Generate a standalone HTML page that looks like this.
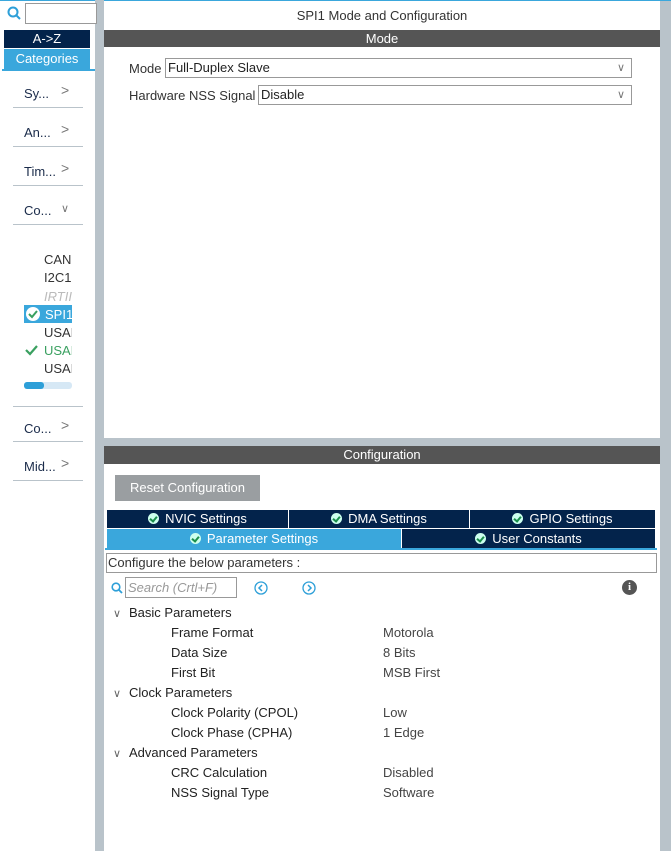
<!DOCTYPE html>
<html><head><style>
*{margin:0;padding:0;box-sizing:border-box}
body{width:671px;height:851px;position:relative;background:#b9c3ca;font-family:"Liberation Sans",sans-serif;font-size:13px;color:#222;overflow:hidden}
.a{position:absolute}
.cat{position:absolute;left:13px;width:70px;border-bottom:1px solid #b9c3ca;height:36px;color:#1a2b4a;font-size:13px}
.cat span{position:absolute;left:11px;top:14px}
.cat i{position:absolute;left:48px;top:10px;font-style:normal;color:#777;font-size:14px}
.li{position:absolute;left:44px;width:28px;overflow:hidden;white-space:nowrap;font-size:13px;color:#333}
.tab{position:absolute;height:18px;background:#03234b;color:#fff;text-align:center;font-size:13px;line-height:18px}
.ck{display:inline-block;width:11px;height:11px;border-radius:50%;background:#cfe;vertical-align:-1px;margin-right:6px;position:relative}
.ck:after{content:"";position:absolute;left:3px;top:2px;width:3px;height:5px;border:solid #1a8f4c;border-width:0 2px 2px 0;transform:rotate(40deg)}
.p{position:absolute;font-size:13px;color:#222}
.v{position:absolute;left:383px;font-size:13px;color:#444}
.chev{position:absolute;font-size:11px;color:#666}
</style></head><body>
<div class="a" style="left:0;top:0;width:95px;height:851px;background:#fff"></div>
<div class="a" style="left:0;top:0;width:95px;height:1px;background:#3aa7dc"></div>
<svg class="a" style="left:7px;top:6px" width="14" height="14"><circle cx="6" cy="6" r="4.5" fill="none" stroke="#2d9fd8" stroke-width="2"/><line x1="9" y1="9" x2="13" y2="13" stroke="#2d9fd8" stroke-width="2"/></svg>
<div class="a" style="left:25px;top:3px;width:72px;height:21px;border:1px solid #999;background:#fff"></div>
<div class="a" style="left:4px;top:30px;width:86px;height:18px;background:#03234b;color:#fff;text-align:center;line-height:18px">A-&gt;Z</div>
<div class="a" style="left:4px;top:49px;width:86px;height:20px;background:#3aa7dc;color:#fff;text-align:center;line-height:20px">Categories</div>
<div class="a" style="left:2px;top:69px;width:93px;height:2px;background:#3aa7dc"></div>
<div class="cat" style="top:72px"><span>Sy...</span><i>&gt;</i></div>
<div class="cat" style="top:111px"><span>An...</span><i>&gt;</i></div>
<div class="cat" style="top:150px"><span>Tim...</span><i>&gt;</i></div>
<div class="cat" style="top:189px"><span>Co...</span><i style="font-size:11px;top:13px">&#8744;</i></div>
<div class="li" style="top:252px">CAN</div>
<div class="li" style="top:270px">I2C1</div>
<div class="li" style="top:289px;color:#bbb;font-style:italic">IRTII</div>
<div class="a" style="left:24px;top:305px;width:48px;height:18px;background:#3aa7dc"></div>
<svg class="a" style="left:25px;top:306px" width="16" height="16"><circle cx="8" cy="8" r="7" fill="#fff"/><path d="M4 8l3 3 5-6" stroke="#3aa060" stroke-width="2" fill="none"/></svg>
<div class="li" style="top:307px;left:45px;width:27px;color:#fff">SPI1</div>
<div class="li" style="top:325px">USART</div>
<svg class="a" style="left:25px;top:344px" width="14" height="12"><path d="M1 6l4 4 7-8" stroke="#3aa060" stroke-width="2.2" fill="none"/></svg>
<div class="li" style="top:343px;color:#3aa060">USART</div>
<div class="li" style="top:361px">USART</div>
<div class="a" style="left:24px;top:382px;width:48px;height:7px;background:#d6e8f5;border-radius:3px"></div>
<div class="a" style="left:24px;top:382px;width:20px;height:7px;background:#2d9fd8;border-radius:3px"></div>
<div class="cat" style="top:406px;border-top:1px solid #b9c3ca"><span>Co...</span><i>&gt;</i></div>
<div class="cat" style="top:445px"><span>Mid...</span><i>&gt;</i></div>
<div class="a" style="left:104px;top:0;width:556px;height:438px;background:#fff"></div>
<div class="a" style="left:104px;top:0;width:567px;height:1px;background:#3aa7dc"></div>
<div class="a" style="left:104px;top:8px;width:556px;text-align:center;color:#333">SPI1 Mode and Configuration</div>
<div class="a" style="left:104px;top:30px;width:556px;height:17px;background:#555;color:#fff;text-align:center;line-height:17px">Mode</div>
<div class="a" style="left:129px;top:61px;color:#333">Mode</div>
<div class="a" style="left:165px;top:58px;width:467px;height:20px;border:1px solid #999;padding-left:2px;line-height:18px">Full-Duplex Slave<span style="position:absolute;right:6px;color:#777;font-size:11px">&#8744;</span></div>
<div class="a" style="left:129px;top:88px;color:#333">Hardware NSS Signal</div>
<div class="a" style="left:258px;top:85px;width:374px;height:20px;border:1px solid #999;padding-left:2px;line-height:18px">Disable<span style="position:absolute;right:6px;color:#777;font-size:11px">&#8744;</span></div>
<div class="a" style="left:104px;top:446px;width:556px;height:405px;background:#fff"></div>
<div class="a" style="left:104px;top:446px;width:556px;height:18px;background:#555;color:#fff;text-align:center;line-height:18px">Configuration</div>
<div class="a" style="left:115px;top:475px;width:145px;height:26px;background:#9a9ea1;color:#fff;text-align:center;line-height:26px">Reset Configuration</div>
<div class="tab" style="left:107px;top:510px;width:181px"><span class="ck"></span>NVIC Settings</div>
<div class="tab" style="left:289px;top:510px;width:180px"><span class="ck"></span>DMA Settings</div>
<div class="tab" style="left:470px;top:510px;width:185px"><span class="ck"></span>GPIO Settings</div>
<div class="tab" style="left:107px;top:529px;width:294px;height:20px;line-height:20px;background:#3aa7dc"><span class="ck"></span>Parameter Settings</div>
<div class="tab" style="left:402px;top:529px;width:253px;height:20px;line-height:20px"><span class="ck"></span>User Constants</div>
<div class="a" style="left:105px;top:548px;width:552px;height:2px;background:#3aa7dc"></div>
<div class="a" style="left:106px;top:553px;width:551px;height:20px;border:1px solid #999;line-height:18px;padding-left:1px;color:#333">Configure the below parameters :</div>
<svg class="a" style="left:111px;top:582px" width="12" height="12"><circle cx="5" cy="5" r="3.8" fill="none" stroke="#2d9fd8" stroke-width="1.6"/><line x1="8" y1="8" x2="11" y2="11" stroke="#2d9fd8" stroke-width="1.8"/></svg>
<div class="a" style="left:125px;top:577px;width:112px;height:21px;border:1px solid #999;color:#999;font-style:italic;line-height:19px;padding-left:2px">Search (Crtl+F)</div>
<svg class="a" style="left:254px;top:581px" width="14" height="14"><circle cx="7" cy="7" r="6" fill="none" stroke="#2d9fd8" stroke-width="1.3"/><path d="M8 4l-3 3 3 3" stroke="#2d9fd8" stroke-width="1.5" fill="none"/></svg>
<svg class="a" style="left:302px;top:581px" width="14" height="14"><circle cx="7" cy="7" r="6" fill="none" stroke="#2d9fd8" stroke-width="1.3"/><path d="M6 4l3 3-3 3" stroke="#2d9fd8" stroke-width="1.5" fill="none"/></svg>
<div class="a" style="left:622px;top:580px;width:15px;height:15px;border-radius:50%;background:#555;color:#fff;font-weight:bold;font-size:11px;text-align:center;line-height:15px;font-family:'Liberation Serif',serif">i</div>
<div class="chev" style="left:113px;top:607px">&#8744;</div><div class="p" style="left:129px;top:605px">Basic Parameters</div>
<div class="p" style="left:171px;top:625px">Frame Format</div><div class="v" style="top:625px">Motorola</div>
<div class="p" style="left:171px;top:645px">Data Size</div><div class="v" style="top:645px">8 Bits</div>
<div class="p" style="left:171px;top:665px">First Bit</div><div class="v" style="top:665px">MSB First</div>
<div class="chev" style="left:113px;top:687px">&#8744;</div><div class="p" style="left:129px;top:685px">Clock Parameters</div>
<div class="p" style="left:171px;top:705px">Clock Polarity (CPOL)</div><div class="v" style="top:705px">Low</div>
<div class="p" style="left:171px;top:725px">Clock Phase (CPHA)</div><div class="v" style="top:725px">1 Edge</div>
<div class="chev" style="left:113px;top:747px">&#8744;</div><div class="p" style="left:129px;top:745px">Advanced Parameters</div>
<div class="p" style="left:171px;top:765px">CRC Calculation</div><div class="v" style="top:765px">Disabled</div>
<div class="p" style="left:171px;top:785px">NSS Signal Type</div><div class="v" style="top:785px">Software</div>
</body></html>
